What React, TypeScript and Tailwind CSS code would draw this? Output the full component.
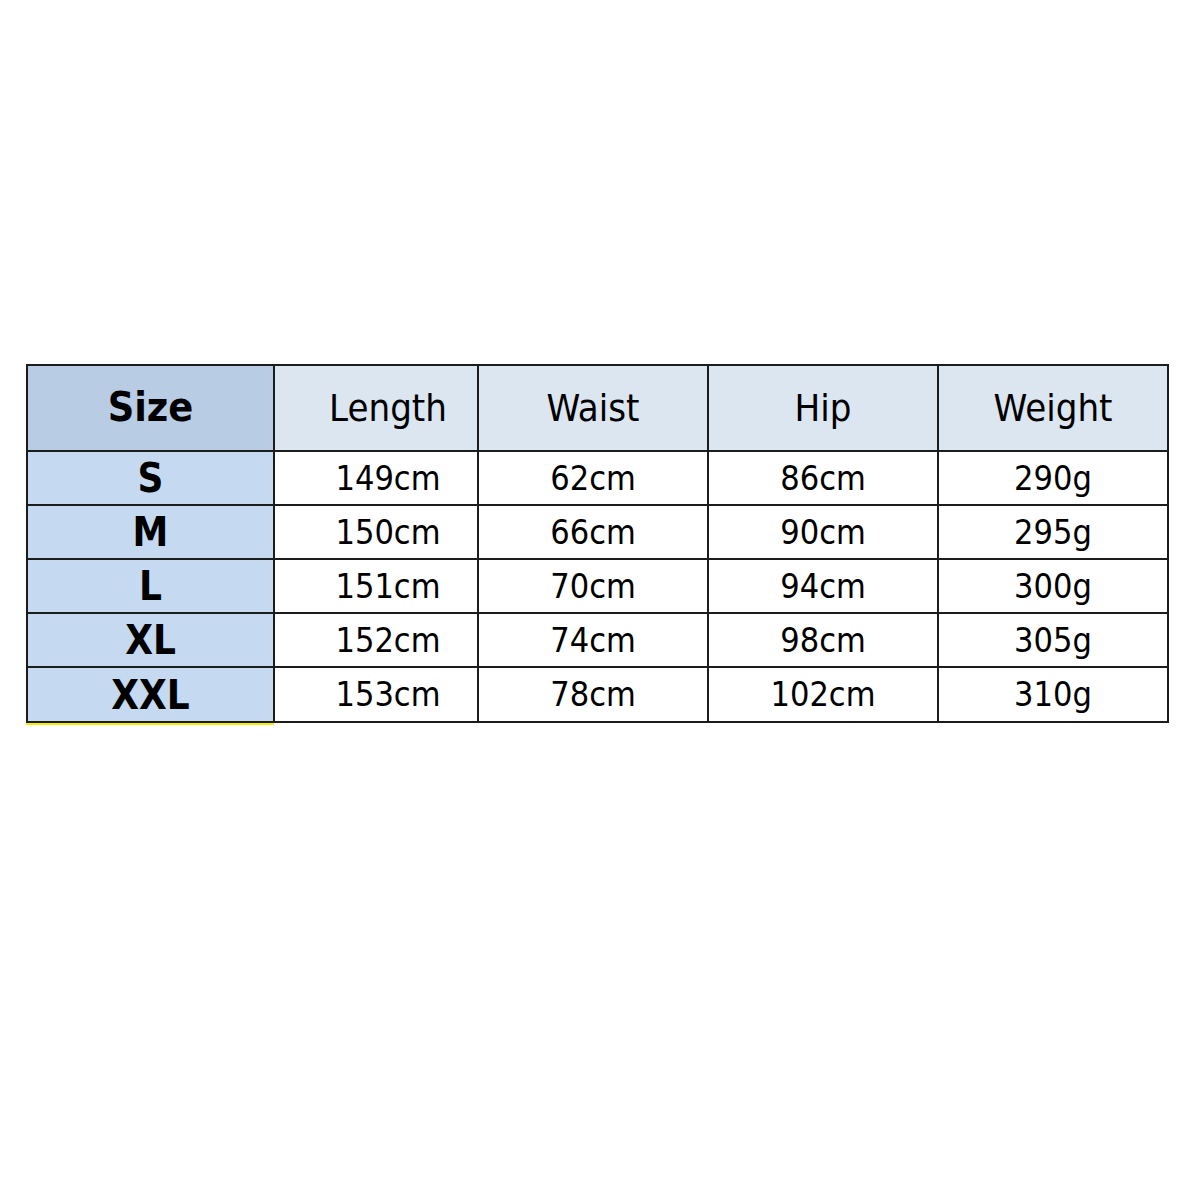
import React from "react";

const rows = [
  ["S", "149cm", "62cm", "86cm", "290g"],
  ["M", "150cm", "66cm", "90cm", "295g"],
  ["L", "151cm", "70cm", "94cm", "300g"],
  ["XL", "152cm", "74cm", "98cm", "305g"],
  ["XXL", "153cm", "78cm", "102cm", "310g"],
];

const font = { fontFamily: '"DejaVu Sans Condensed", "DejaVu Sans", Tahoma, sans-serif', fontStretch: "condensed" as const };

export default function App() {
  return (
    <div className="w-[1200px] h-[1200px] bg-white" style={font}>
      <div className="pt-[364px] pl-[26px]">
        <div className="w-[1143px] border-l-2 border-t-2 border-[#1c1c1c] grid grid-cols-[247px_204px_230px_230px_230px] text-black">
          <div className="h-[86px] bg-[#b8cce4] border-r-2 border-b-2 border-[#1c1c1c] flex items-center justify-center text-[41px] font-bold">Size</div>
          {["Length", "Waist", "Hip", "Weight"].map((h, i) => (
            <div
              key={h}
              className={`h-[86px] bg-[#dce6f1] border-r-2 border-b-2 border-[#1c1c1c] flex items-center justify-center text-[38px] ${i === 0 ? "pl-6" : ""}`}
            >
              {h}
            </div>
          ))}
          {rows.map((r, ri) => (
            <React.Fragment key={r[0]}>
              <div className={`${ri === 4 ? "h-[55px]" : "h-[54px]"} bg-[#c5d9f1] border-r-2 border-b-2 border-[#1c1c1c] flex items-center justify-center text-[40px] font-bold`}>
                {r[0]}
              </div>
              {r.slice(1).map((c, ci) => (
                <div
                  key={ci}
                  className={`${ri === 4 ? "h-[55px]" : "h-[54px]"} bg-white border-r-2 border-b-2 border-[#1c1c1c] flex items-center justify-center text-[34px] ${ci === 0 ? "pl-6" : ""}`}
                >
                  {c}
                </div>
              ))}
            </React.Fragment>
          ))}
        </div>
        <div className="w-[248px] h-[2px] bg-[#f5f000]"></div>
      </div>
    </div>
  );
}
